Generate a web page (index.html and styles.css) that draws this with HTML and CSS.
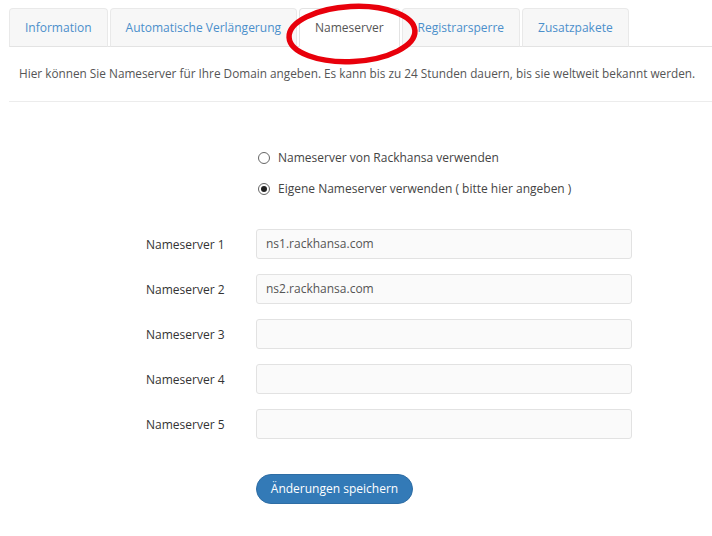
FILE: index.html
```html
<!DOCTYPE html>
<html lang="de">
<head>
<meta charset="utf-8">
<title>Nameserver</title>
<link rel="stylesheet" href="styles.css">
</head>
<body>
<div class="page">
  <ul class="tabs">
    <li class="tab"><a>Information</a></li>
    <li class="tab"><a>Automatische Verlängerung</a></li>
    <li class="tab active"><a>Nameserver</a></li>
    <li class="tab"><a>Registrarsperre</a></li>
    <li class="tab"><a>Zusatzpakete</a></li>
  </ul>
  <p class="intro">Hier können Sie Nameserver für Ihre Domain angeben. Es kann bis zu 24 Stunden dauern, bis sie weltweit bekannt werden.</p>
  <div class="rule"></div>
  <form class="form">
    <div class="radios">
      <label class="radio"><span class="dot"></span>Nameserver von Rackhansa verwenden</label>
      <label class="radio"><span class="dot checked"></span>Eigene Nameserver verwenden ( bitte hier angeben )</label>
    </div>
    <div class="fields">
      <label class="lbl">Nameserver 1</label><div class="inp">ns1.rackhansa.com</div>
      <label class="lbl">Nameserver 2</label><div class="inp">ns2.rackhansa.com</div>
      <label class="lbl">Nameserver 3</label><div class="inp"></div>
      <label class="lbl">Nameserver 4</label><div class="inp"></div>
      <label class="lbl">Nameserver 5</label><div class="inp"></div>
    </div>
    <div class="actions"><span class="btn">Änderungen speichern</span></div>
  </form>
  <svg class="mark" width="150" height="80" viewBox="0 0 150 80">
    <ellipse cx="75" cy="40" rx="63" ry="27.5" fill="none" stroke="#e8000b" stroke-width="5.5" transform="rotate(-3 75 40)"/>
  </svg>
</div>
</body>
</html>
```
FILE: styles.css
```css
html, body {
  margin: 0;
  padding: 0;
  background: #fff;
}
body {
  font-family: "Open Sans", "Liberation Sans", sans-serif;
  font-size: 12px;
  color: #555;
}
.page {
  position: relative;
  width: 712px;
  height: 536px;
  overflow: hidden;
}
.tabs {
  list-style: none;
  margin: 8px 0 0 9px;
  padding: 0;
  display: flex;
  border-bottom: 1px solid #e3e3e3;
}
.tab {
  margin-right: 2px;
  margin-bottom: -1px;
}
.tab a {
  display: block;
  padding: 10px 15px 10px 15px;
  line-height: 17px;
  font-size: 12px;
  color: #4b8fcb;
  background: #f7f7f7;
  border: 1px solid #e9e9e9;
  border-bottom-color: #e3e3e3;
  border-radius: 4px 4px 0 0;
}
.tab.active a {
  color: #555;
  background: #fff;
  border-color: #e3e3e3;
  border-bottom-color: #fff;
}
.intro {
  margin: 0 0 0 19px;
  padding: 18px 0 0 0;
  height: 36px;
  line-height: 17px;
  font-size: 11.8px;
}
.rule {
  margin-left: 9px;
  border-top: 1px solid #ececec;
}
.form {
  padding: 47px 0 0 146px;
}
.radios {
  margin-left: 112px;
  display: flex;
  flex-direction: column;
  gap: 14px;
}
.radio {
  display: flex;
  align-items: center;
  gap: 8px;
  line-height: 17px;
  color: #444;
}
.dot {
  width: 10px;
  height: 10px;
  border: 1px solid #666;
  border-radius: 50%;
  display: flex;
  align-items: center;
  justify-content: center;
  background: #fff;
}
.dot.checked::after {
  content: "";
  width: 6px;
  height: 6px;
  border-radius: 50%;
  background: #222;
}
.fields {
  margin-top: 32px;
  display: grid;
  grid-template-columns: 110px 376px;
  row-gap: 15px;
  align-items: center;
}
.lbl {
  color: #333;
  line-height: 17px;
}
.inp {
  box-sizing: border-box;
  height: 30px;
  border: 1px solid #e2e2e2;
  border-radius: 3px;
  background: #fafafa;
  padding: 0 9px;
  line-height: 28px;
  color: #555;
}
.actions {
  margin: 35px 0 0 110px;
}
.btn {
  display: inline-block;
  width: 157px;
  height: 30px;
  box-sizing: border-box;
  border-radius: 15px;
  background: #337ab7;
  border: 1px solid #2e6da4;
  color: #fff;
  text-align: center;
  line-height: 28px;
  font-size: 12px;
}
.mark {
  position: absolute;
  left: 277px;
  top: -6px;
}
```
